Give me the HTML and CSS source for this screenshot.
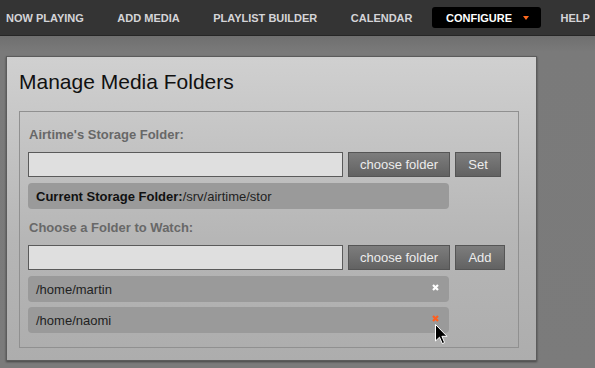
FILE: index.html
```html
<!DOCTYPE html>
<html lang="en">

<head>
    <meta charset="UTF-8">
    <meta name="viewport" content="width=device-width, initial-scale=1.0">
    <title>Manage Media Folders</title>
    <link rel="stylesheet" href="styles.css">
</head>

<body>
    <div class='nav'>
        <a class='nav-item'>NOW PLAYING</a>
        <a class='nav-item'>ADD MEDIA</a>
        <a class='nav-item'>PLAYLIST BUILDER</a>
        <a class='nav-item'>CALENDAR</a>
        <a class='nav-item active'>CONFIGURE <span class='arrow'></span></a>
        <a class='nav-item help'>HELP</a>
    </div>

    <div class='panel'>
        <h2>Manage Media Folders</h2>
        <div class='box'>
            <div class='label'>Airtime's Storage Folder:</div>
            <div class='line'>
                <input class='field' type='text'>
                <button class='btn choose'>choose folder</button>
                <button class='btn set'>Set</button>
            </div>
            <div class='row'><span><b>Current Storage Folder:</b>/srv/airtime/stor</span></div>

            <div class='label watch'>Choose a Folder to Watch:</div>
            <div class='line'>
                <input class='field' type='text'>
                <button class='btn choose'>choose folder</button>
                <button class='btn add'>Add</button>
            </div>
            <div class='row'>
                <span>/home/martin</span>
                <svg class='remove' width='7' height='7' viewBox='0 0 7 7'><path d='M1 1L6 6M6 1L1 6' /></svg>
            </div>
            <div class='row hover'>
                <span>/home/naomi</span>
                <svg class='remove' width='7' height='7' viewBox='0 0 7 7'><path d='M1 1L6 6M6 1L1 6' /></svg>
                <svg class='cursor' width='13' height='21' viewBox='0 0 13 21'><path d='M0.5 0.5L0.5 17L4.5 13.2L7.3 19.6L9.6 18.6L6.9 12.3L12 12.3Z' /></svg>
            </div>
        </div>
    </div>
</body>

</html>
```

FILE: styles.css
```css
body {
    margin: 0;
    font-family: "Liberation Sans", Arial, sans-serif;
    background: linear-gradient(#666666 0px, #6f6f6f 36px, #7a7a7a 52px, #7b7b7b 100%);
    min-height: 368px;
}

.nav {
    display: flex;
    align-items: center;
    height: 35px;
    background-color: #343434;
    border-bottom: 1px solid #262626;
    gap: 19.5px;
    white-space: nowrap;
}

.nav-item {
    flex-shrink: 0;
    font-size: 11px;
    font-weight: bold;
    color: #d4d4d8;
    padding: 0 7px;
}

.nav-item:first-child {
    padding-left: 6px;
}

.active {
    display: flex;
    align-items: center;
    height: 21px;
    margin: 0 -7px;
    padding: 0 12px 0 14px;
    background-color: #000;
    border-radius: 3px;
    color: #fff;
}

.arrow {
    margin-left: 11px;
    border-left: 3px solid transparent;
    border-right: 3px solid transparent;
    border-top: 4px solid #ff6a1f;
}

.panel {
    margin: 20px 0 0 6px;
    width: 511px;
    height: 303px;
    padding: 0 6px 0 12px;
    border: 1px solid #5c5c5c;
    background: linear-gradient(#d0d0d0, #b6b6b6 60%, #adadad);
    box-shadow: 0 1px 2px rgba(0, 0, 0, 0.45);
}

h2 {
    margin: 0;
    padding: 13px 0 0 0;
    height: 41px;
    font-size: 21px;
    font-weight: normal;
    color: #111;
}

.box {
    width: 482px;
    padding: 15px 8px 14px 8px;
    border: 1px solid #909090;
}

.label {
    font-size: 13px;
    font-weight: bold;
    line-height: 16px;
    color: #686868;
    padding-left: 1px;
    margin-bottom: 9px;
}

.watch {
    margin-top: 11px;
}

.line {
    display: flex;
    gap: 5px;
    height: 25px;
}

.field {
    box-sizing: border-box;
    width: 315px;
    height: 25px;
    margin: 0;
    border: 1px solid #5a5a5a;
    background-color: #dfdfdf;
}

.btn {
    box-sizing: border-box;
    height: 25px;
    margin: 0;
    padding: 0;
    border: 1px solid #555;
    background: linear-gradient(#7d7d7d, #626262);
    color: #ececec;
    font-family: "Liberation Sans", Arial, sans-serif;
    font-size: 13px;
}

.choose {
    width: 102px;
}

.set {
    width: 46px;
}

.add {
    width: 50px;
}

.row {
    position: relative;
    display: flex;
    align-items: center;
    justify-content: space-between;
    width: 421px;
    height: 26px;
    margin-top: 6px;
    padding: 0 10px 0 8px;
    box-sizing: border-box;
    border-radius: 4px;
    background-color: #9a9a9a;
    font-size: 13px;
    color: #222;
}

.row + .row {
    margin-top: 5px;
}

.row b {
    color: #111;
}

.remove {
    margin-top: -3px;
}

.remove path {
    stroke: #fff;
    stroke-width: 2.2;
}

.hover .remove path {
    stroke: #ff5f1f;
}

.cursor {
    position: absolute;
    left: 407px;
    top: 17px;
}

.cursor path {
    fill: #000;
    stroke: #fff;
    stroke-width: 1;
}
```
